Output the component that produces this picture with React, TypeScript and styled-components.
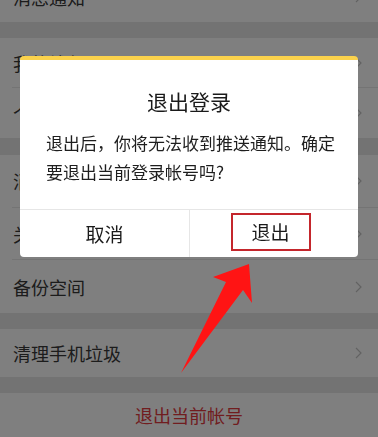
import styled, { createGlobalStyle } from "styled-components";

const GlobalStyle = createGlobalStyle`
  html, body {
    margin: 0;
    padding: 0;
    background: #e6e6e6;
    overflow: hidden;
  }
  body {
    font-family: "Noto Sans CJK SC", "Noto Sans", sans-serif;
  }
`;

type RowItem = { label: string; h: number };

const groups: { gapBefore: number; rows: RowItem[] }[] = [
  { gapBefore: -28, rows: [{ label: "消息通知", h: 50 }] },
  {
    gapBefore: 16,
    rows: [
      { label: "我的钱包", h: 49 },
      { label: "个人信息", h: 51 },
    ],
  },
  {
    gapBefore: 17,
    rows: [
      { label: "消息设置", h: 52 },
      { label: "关于我们", h: 52 },
      { label: "备份空间", h: 54 },
    ],
  },
  { gapBefore: 16, rows: [{ label: "清理手机垃圾", h: 48 }] },
];

export default function App() {
  return (
    <>
      <GlobalStyle />
      <Page>
        {groups.map((g) => (
          <Group key={g.rows[0].label} $gap={g.gapBefore}>
            {g.rows.map((r) => (
              <Row key={r.label} $h={r.h}>
                <Label>{r.label}</Label>
                <Chevron width="7" height="12" viewBox="0 0 7 12">
                  <polyline points="1,1 6,6 1,11" />
                </Chevron>
              </Row>
            ))}
          </Group>
        ))}
        <LogoutRow>退出当前帐号</LogoutRow>
      </Page>

      <Overlay>
        <Dialog>
          <DialogTitle>退出登录</DialogTitle>
          <DialogBody>
            退出后，你将无法收到推送通知。确定要退出当前登录帐号吗?
          </DialogBody>
          <Actions>
            <ActionButton>取消</ActionButton>
            <ActionButton>
              <Highlight>退出</Highlight>
            </ActionButton>
          </Actions>
        </Dialog>
        <Arrow width="90" height="125" viewBox="0 0 90 125">
          <polygon points="79,9 43,22 56,27 11,118 73,35 82,48" />
        </Arrow>
      </Overlay>
    </>
  );
}

const Page = styled.div`
  display: flex;
  flex-direction: column;
  width: 378px;
  height: 437px;
  overflow: hidden;
`;

const Group = styled.div<{ $gap: number }>`
  margin-top: ${(p) => p.$gap}px;
  background: #fff;
  padding-left: 12px;
  display: flex;
  flex-direction: column;
`;

const Row = styled.div<{ $h: number }>`
  height: ${(p) => p.$h}px;
  box-sizing: border-box;
  display: flex;
  align-items: center;
  justify-content: space-between;
  padding: 0 16px 0 1px;

  & + & {
    border-top: 1px solid #e9e9e9;
  }
`;

const Label = styled.span`
  font-size: 18px;
  color: #383838;
`;

const Chevron = styled.svg`
  fill: none;
  stroke: #c4c4c4;
  stroke-width: 1.2;
`;

const LogoutRow = styled.div`
  margin-top: 16px;
  height: 48px;
  background: #fff;
  display: flex;
  align-items: center;
  justify-content: center;
  font-size: 18px;
  color: #e23a3e;
`;

const Overlay = styled.div`
  position: fixed;
  inset: 0;
  background: rgba(0, 0, 0, 0.5);
  display: flex;
  justify-content: center;
  align-items: flex-start;
  padding-top: 56px;
`;

const Dialog = styled.div`
  width: 338px;
  height: 201px;
  box-sizing: border-box;
  background: #fff;
  border-top: 4px solid #fbd24c;
  border-radius: 4px;
  display: flex;
  flex-direction: column;
  overflow: hidden;
`;

const DialogTitle = styled.div`
  padding-top: 26px;
  font-size: 21px;
  line-height: 30px;
  text-align: center;
  color: #1a1a1a;
`;

const DialogBody = styled.div`
  margin-top: 12px;
  padding: 0 20px 0 26px;
  font-size: 17px;
  line-height: 29px;
  color: #1e1e1e;
  height: 58px;
`;

const Actions = styled.div`
  margin-top: auto;
  height: 47px;
  border-top: 1px solid #e6e6e6;
  display: grid;
  grid-template-columns: 1fr 1fr;
`;

const ActionButton = styled.div`
  display: flex;
  align-items: center;
  justify-content: center;
  font-size: 19px;
  color: #1a1a1a;

  & + & {
    border-left: 1px solid #e6e6e6;
    padding-right: 7px;
  }
`;

const Highlight = styled.span`
  box-sizing: border-box;
  width: 80px;
  height: 38px;
  margin-top: -4px;
  border: 2px solid #c4262c;
  display: flex;
  align-items: center;
  justify-content: center;
`;

const Arrow = styled.svg`
  position: absolute;
  left: 170px;
  top: 255px;
  fill: #ff1414;
`;
